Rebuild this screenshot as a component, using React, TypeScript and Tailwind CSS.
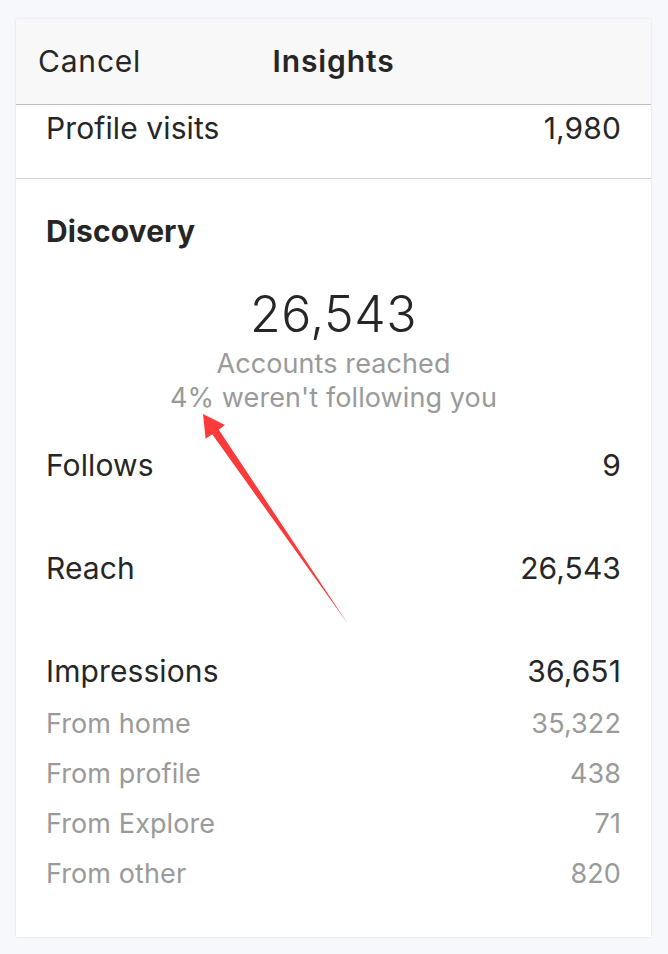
import React from "react";

const font = { fontFamily: "Inter, 'Noto Sans', sans-serif" };

function Row({ label, value, sub = false, h }: { label: string; value: string; sub?: boolean; h: string }) {
  const cls = sub
    ? "text-[27px] leading-[34px] text-[#9a9a9a] tracking-[0.1px]"
    : "text-[30px] leading-[36px] text-[#262626] tracking-[0.1px]";
  return (
    <div className={`flex justify-between items-start px-[30px] ${h}`}>
      <span className={cls}>{label}</span>
      <span className={cls}>{value}</span>
    </div>
  );
}

export default function App() {
  return (
    <div className="relative w-[668px] h-[954px] bg-[#f7f8fc] pt-[19px] px-[16px]" style={font}>
      <div className="w-[635px] bg-white shadow-[0_0_2px_rgba(0,0,0,0.12)]">
        <div className="grid grid-cols-3 items-center h-[86px] bg-[#f8f8f8] border-b border-[#bdbdbd] px-[22px]">
          <span className="text-[30px] tracking-[0.8px] text-[#262626] justify-self-start">Cancel</span>
          <span className="text-[30px] font-semibold tracking-[0.9px] text-[#262626] justify-self-center">Insights</span>
          <span />
        </div>
        <div className="border-b border-[#d4d4d4] pt-[5px] h-[74px]">
          <Row label="Profile visits" value="1,980" h="" />
        </div>
        <div className="pt-[34px] px-[30px]">
          <div className="text-[30px] leading-[36px] font-bold text-[#262626] tracking-[0.1px]">Discovery</div>
        </div>
        <div className="flex flex-col items-center mt-[37px]">
          <div className="text-[50px] leading-[56px] font-light text-[#262626] tracking-[0.5px]">26,543</div>
          <div className="mt-[5px] text-[27px] leading-[34px] text-[#9a9a9a] tracking-[0.1px]">Accounts reached</div>
          <div className="text-[27px] leading-[34px] text-[#9a9a9a] tracking-[0.1px]">4% weren't following you</div>
        </div>
        <div className="mt-[32px]">
          <Row label="Follows" value="9" h="h-[103px]" />
          <Row label="Reach" value="26,543" h="h-[103px]" />
          <Row label="Impressions" value="36,651" h="h-[54px]" />
          <Row label="From home" value="35,322" sub h="h-[50px]" />
          <Row label="From profile" value="438" sub h="h-[50px]" />
          <Row label="From Explore" value="71" sub h="h-[50px]" />
          <Row label="From other" value="820" sub h="h-[50px]" />
          <div className="h-[30px]" />
        </div>
      </div>
      <svg className="absolute left-0 top-0 pointer-events-none" width="668" height="954" viewBox="0 0 668 954">
        <polygon
          points="203,414 225,425 218.8,429.7 348,624 212.2,434.3 205.6,438.8"
          fill="#fc3a3a"
        />
      </svg>
    </div>
  );
}
